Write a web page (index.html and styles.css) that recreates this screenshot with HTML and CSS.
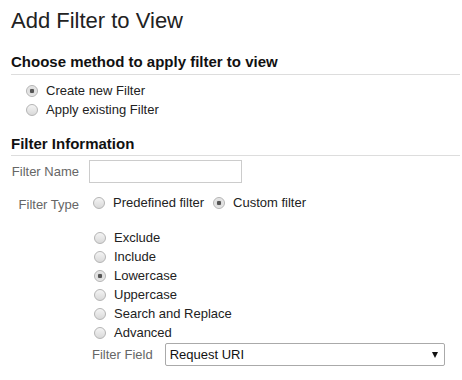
FILE: index.html
```html
<html>

<head>
    <link rel="stylesheet" href="styles.css">
</head>

<body>
    <h1 class="title">Add Filter to View</h1>

    <h2 class="section-head">Choose method to apply filter to view</h2>
    <div class="method">
        <label class="radio-row"><input type="radio" name="method" checked> Create new Filter</label>
        <label class="radio-row"><input type="radio" name="method"> Apply existing Filter</label>
    </div>

    <h2 class="section-head info-head">Filter Information</h2>
    <div class="field-row">
        <span class="field-label">Filter Name</span>
        <input class="text-input" type="text">
    </div>
    <div class="field-row type-row">
        <span class="field-label type-label">Filter Type</span>
        <div class="type-options">
            <label class="radio-row"><input type="radio" name="ftype"> Predefined filter</label>
            <label class="radio-row"><input type="radio" name="ftype" checked> Custom filter</label>
        </div>
    </div>

    <div class="custom-list">
        <label class="radio-row"><input type="radio" name="custom"> Exclude</label>
        <label class="radio-row"><input type="radio" name="custom"> Include</label>
        <label class="radio-row"><input type="radio" name="custom" checked> Lowercase</label>
        <label class="radio-row"><input type="radio" name="custom"> Uppercase</label>
        <label class="radio-row"><input type="radio" name="custom"> Search and Replace</label>
        <label class="radio-row"><input type="radio" name="custom"> Advanced</label>
    </div>

    <div class="field-row field-select-row">
        <span class="field-label">Filter Field</span>
        <span class="select-wrap">
            <select class="select-box">
                <option>Request URI</option>
            </select>
        </span>
    </div>
</body>

</html>
```

FILE: styles.css
```css
* {
    margin: 0;
    padding: 0;
    box-sizing: border-box;
}

body {
    background-color: #fff;
    color: #222;
    font-family: Arial, "Liberation Sans", sans-serif;
    font-size: 13px;
    padding: 8px 2px 0 11px;
}

h1.title {
    font-size: 22px;
    font-weight: normal;
    line-height: 26px;
    color: #222;
}

h2.section-head {
    font-size: 15px;
    font-weight: bold;
    line-height: 18px;
    color: #111;
    margin-top: 19px;
    padding-bottom: 3px;
    border-bottom: 1px solid #ddd;
}

h2.info-head {
    margin-top: 16px;
    padding-bottom: 2px;
}

div.method {
    margin-top: 6px;
    padding-left: 15px;
}

label.radio-row {
    display: flex;
    align-items: center;
    line-height: 19px;
    height: 19px;
    white-space: nowrap;
}

input[type=radio] {
    appearance: none;
    -webkit-appearance: none;
    width: 12px;
    height: 12px;
    margin: 0 8px 0 0;
    border: 1px solid #b4b4b4;
    border-radius: 50%;
    background: linear-gradient(#f4f4f4, #d9d9d9);
    flex-shrink: 0;
}

input[type=radio]:checked {
    background: radial-gradient(circle, #555 0, #555 2px, #dcdcdc 2.5px, #f2f2f2 100%);
}

div.field-row {
    display: flex;
    align-items: center;
    margin-top: 4px;
}

span.field-label {
    width: 68px;
    margin-right: 10px;
    text-align: right;
    color: #666;
    white-space: nowrap;
}

input.text-input {
    width: 153px;
    height: 23px;
    border: 1px solid #ccc;
    font-family: inherit;
    font-size: 13px;
    padding: 0 4px;
}

div.type-row {
    align-items: flex-start;
    margin-top: 10px;
}

span.type-label {
    padding-top: 4px;
}

div.type-options {
    display: flex;
    padding-left: 4px;
    gap: 9px;
}

div.custom-list {
    margin-top: 16px;
    padding-left: 83px;
}

div.field-select-row {
    margin-top: 1px;
    padding-left: 81px;
}

div.field-select-row span.field-label {
    width: auto;
    margin-right: 12px;
}

span.select-wrap {
    position: relative;
    display: inline-block;
}

select.select-box {
    appearance: none;
    -webkit-appearance: none;
    width: 280px;
    height: 23px;
    border: 1px solid #aaa;
    border-radius: 2px;
    background-color: #fff;
    color: #111;
    font-family: inherit;
    font-size: 13px;
    padding: 0 4px;
}

/* little arrow on the right of the select */
span.select-wrap::after {
    content: "";
    position: absolute;
    right: 7px;
    top: 9px;
    border-left: 3.5px solid transparent;
    border-right: 3.5px solid transparent;
    border-top: 6px solid #111;
    pointer-events: none;
}
```
